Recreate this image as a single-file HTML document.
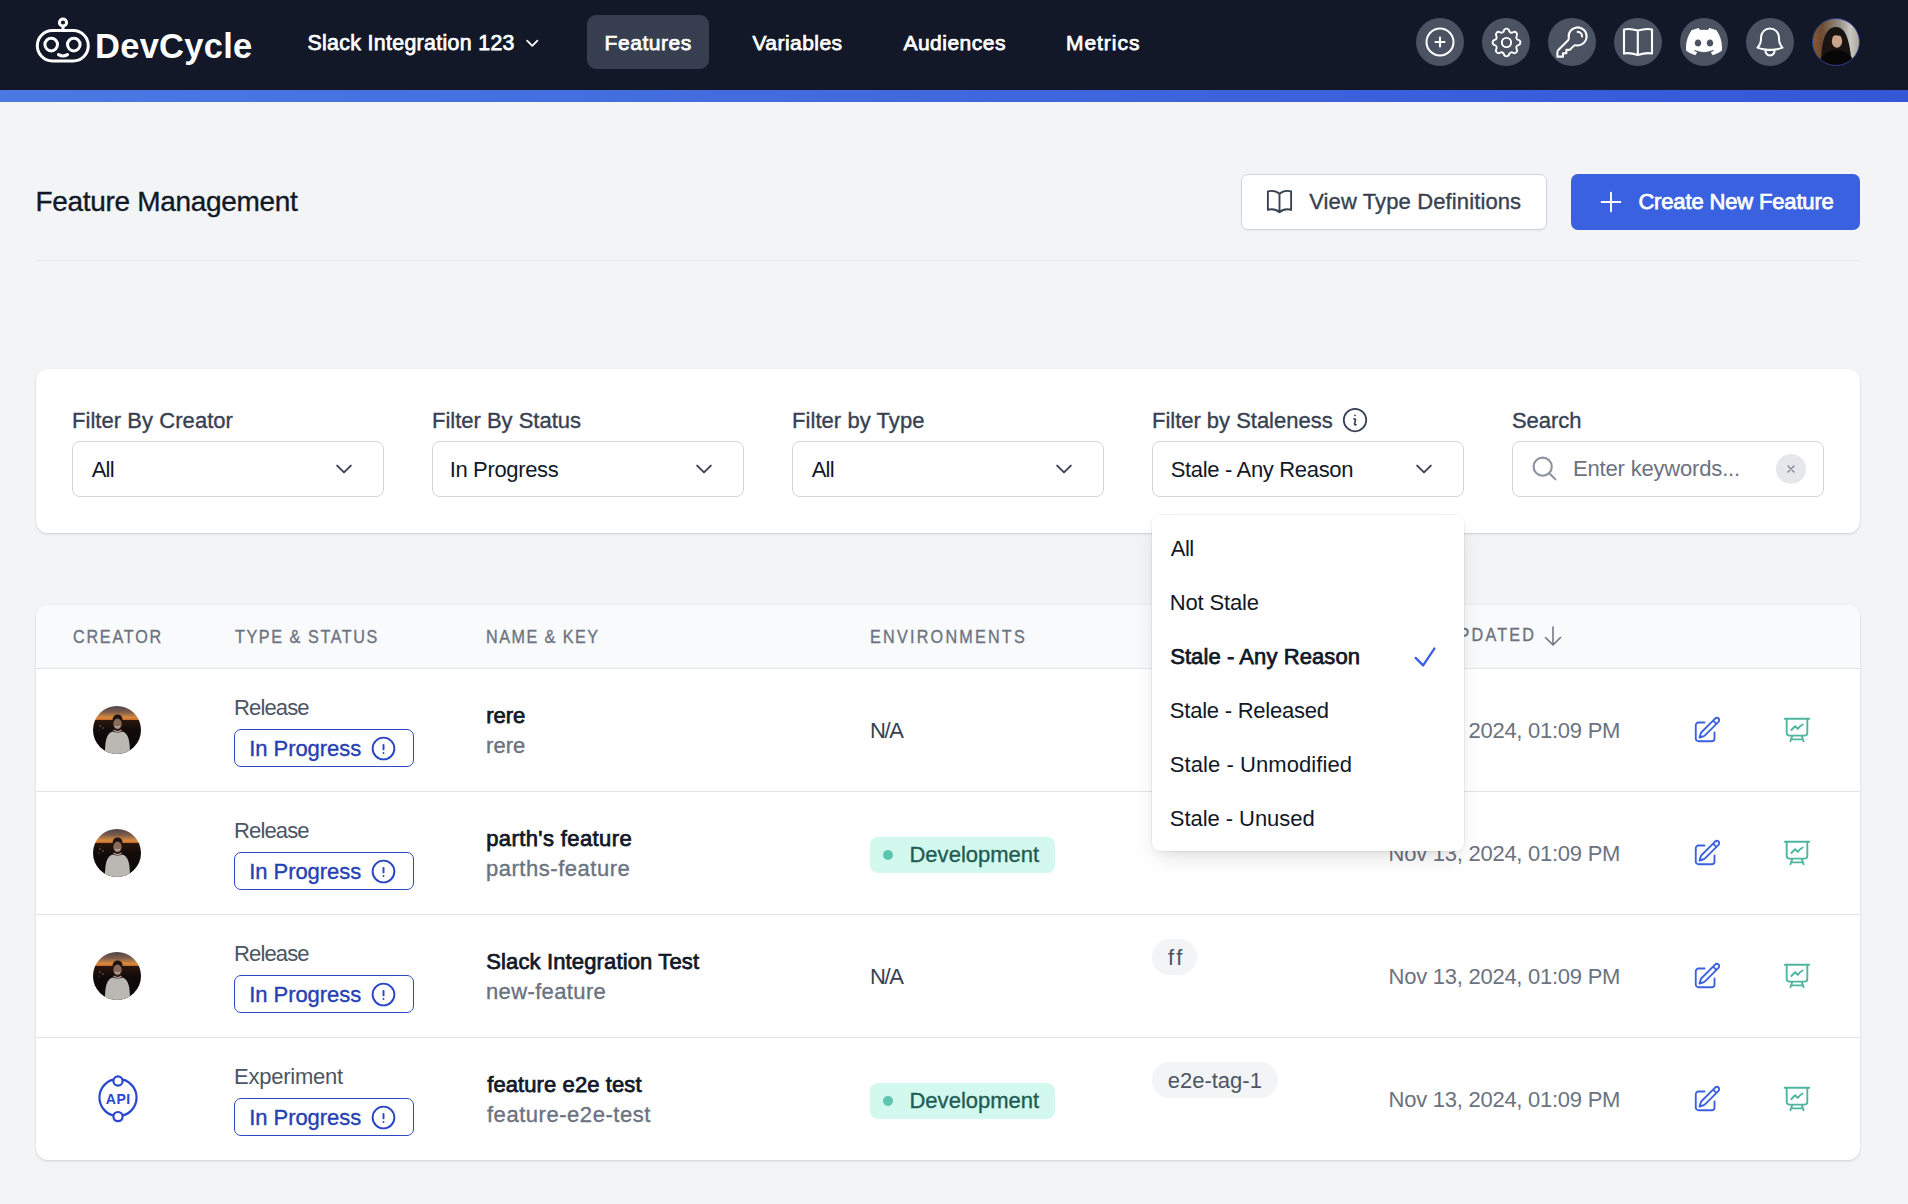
<!DOCTYPE html>
<html><head><meta charset="utf-8"><style>
html,body{margin:0;padding:0;width:1908px;height:1204px;overflow:hidden;background:#f3f4f6}
body{position:relative;font-family:"Liberation Sans",sans-serif}
.t{position:absolute;white-space:nowrap;line-height:1;font-variant-ligatures:none}
</style></head><body>
<div style="position:absolute;left:0px;top:0px;width:1908px;height:90px;background:#121827;z-index:0"></div>
<div style="position:absolute;left:0px;top:90px;width:1908px;height:12px;background:linear-gradient(90deg,#4b79e3,#3457d8);z-index:0"></div>
<svg style="position:absolute;left:34px;top:16px;z-index:2" width="58" height="48" viewBox="0 0 58 48" ><g fill="none" stroke="#fff" stroke-width="3"><rect x="3.3" y="14.6" width="51" height="30.3" rx="15.1"/><circle cx="17.2" cy="28.6" r="6.3"/><circle cx="39.8" cy="28.6" r="6.3"/><circle cx="29" cy="6.5" r="3.6"/><line x1="29" y1="10" x2="29" y2="14.5"/><path d="M24.5 38.6 q4.5 2.6 9 0" stroke-linecap="round"/></g></svg>
<div class="t" style="left:95.00px;top:28.80px;font-size:34.5px;font-weight:700;color:#ffffff;letter-spacing:0.262px;z-index:1;">DevCycle</div>
<div class="t" style="left:307.38px;top:32.57px;font-size:21.3px;font-weight:400;color:#ffffff;letter-spacing:0.350px;z-index:1;-webkit-text-stroke:0.75px #ffffff;">Slack Integration 123</div>
<svg style="position:absolute;left:524.2px;top:35.2px;z-index:2" width="16.5" height="16.5" viewBox="0 0 24 24" ><path d="m19.5 8.25-7.5 7.5-7.5-7.5" fill="none" stroke="#ffffff" stroke-width="2.6" stroke-linecap="round" stroke-linejoin="round"/></svg>
<div style="position:absolute;left:587px;top:15px;width:122px;height:54px;background:#373e4f;border-radius:9px;z-index:0"></div>
<div class="t" style="left:604.58px;top:31.72px;font-size:21px;font-weight:400;color:#ffffff;letter-spacing:0.554px;z-index:1;-webkit-text-stroke:0.75px #ffffff;">Features</div>
<div class="t" style="left:752.38px;top:31.72px;font-size:21px;font-weight:400;color:#ffffff;letter-spacing:0.470px;z-index:1;-webkit-text-stroke:0.75px #ffffff;">Variables</div>
<div class="t" style="left:903.38px;top:31.72px;font-size:21px;font-weight:400;color:#ffffff;letter-spacing:0.498px;z-index:1;-webkit-text-stroke:0.75px #ffffff;">Audiences</div>
<div class="t" style="left:1065.97px;top:31.72px;font-size:21px;font-weight:400;color:#ffffff;letter-spacing:0.964px;z-index:1;-webkit-text-stroke:0.75px #ffffff;">Metrics</div>
<div style="position:absolute;left:1416px;top:18px;width:48px;height:48px;background:#4b5262;border-radius:50%;z-index:0"></div>
<div style="position:absolute;left:1482px;top:18px;width:48px;height:48px;background:#4b5262;border-radius:50%;z-index:0"></div>
<div style="position:absolute;left:1548px;top:18px;width:48px;height:48px;background:#4b5262;border-radius:50%;z-index:0"></div>
<div style="position:absolute;left:1614px;top:18px;width:48px;height:48px;background:#4b5262;border-radius:50%;z-index:0"></div>
<div style="position:absolute;left:1680px;top:18px;width:48px;height:48px;background:#4b5262;border-radius:50%;z-index:0"></div>
<div style="position:absolute;left:1746px;top:18px;width:48px;height:48px;background:#4b5262;border-radius:50%;z-index:0"></div>
<svg style="position:absolute;left:1422px;top:24px;z-index:3" width="36" height="36" viewBox="0 0 24 24" ><path d="M12 9v6m3-3H9m12 0a9 9 0 1 1-18 0 9 9 0 0 1 18 0Z" fill="none" stroke="#ffffff" stroke-width="1.35" stroke-linecap="round" stroke-linejoin="round"/></svg>
<svg style="position:absolute;left:1487.5px;top:23.5px;z-index:3" width="37" height="37" viewBox="0 0 24 24" ><path fill="none" stroke="#fff" stroke-width="1.25" stroke-linecap="round" stroke-linejoin="round" d="M10.325 4.317c.426-1.756 2.924-1.756 3.35 0a1.724 1.724 0 002.573 1.066c1.543-.94 3.31.826 2.37 2.37a1.724 1.724 0 001.065 2.572c1.756.426 1.756 2.924 0 3.35a1.724 1.724 0 00-1.066 2.573c.94 1.543-.826 3.31-2.37 2.37a1.724 1.724 0 00-2.572 1.065c-.426 1.756-2.924 1.756-3.35 0a1.724 1.724 0 00-2.573-1.066c-1.543.94-3.310-.826-2.370-2.370a1.724 1.724 0 00-1.065-2.572c-1.756-.426-1.756-2.924 0-3.350a1.724 1.724 0 001.066-2.573c-.94-1.543.826-3.310 2.370-2.370.996.608 2.296.07 2.572-1.065z"/><path fill="none" stroke="#fff" stroke-width="1.25" d="M15 12a3 3 0 11-6 0 3 3 0 016 0z"/></svg>
<svg style="position:absolute;left:1554px;top:24px;z-index:3" width="36" height="36" viewBox="0 0 24 24" ><path d="M15.75 5.25a3 3 0 0 1 3 3m3 0a6 6 0 0 1-7.029 5.912c-.563-.097-1.159.026-1.563.43L10.5 17.25H8.25v2.25H6v2.25H2.25v-2.818c0-.597.237-1.17.659-1.591l6.499-6.499c.404-.404.527-1 .43-1.563A6 6 0 1 1 21.75 8.25Z" fill="none" stroke="#ffffff" stroke-width="1.35" stroke-linecap="round" stroke-linejoin="round"/></svg>
<svg style="position:absolute;left:1622px;top:27px;z-index:3" width="32" height="30" viewBox="0 0 32 30" ><path fill="none" stroke="#fff" stroke-width="2.1" stroke-linejoin="round" d="M2 2.5 Q8 1.2 15.8 3.6 Q24 1.2 30 2.5 V26.5 Q24 25.4 15.8 28 Q8 25.4 2 26.5 Z M15.8 3.6 V28"/></svg>
<svg style="position:absolute;left:1686px;top:28.4px;z-index:3" width="36" height="27.3" viewBox="0 0 127.14 96.36" ><path fill="#fff" d="M107.7,8.07A105.15,105.15,0,0,0,81.47,0a72.06,72.06,0,0,0-3.36,6.83A97.68,97.68,0,0,0,49,6.83,72.37,72.37,0,0,0,45.640,0,105.89,105.89,0,0,0,19.39,8.09C2.79,32.65-1.71,56.6.54,80.21h0A105.73,105.730,0,0,0,32.71,96.36,77.7,77.7,0,0,0,39.6,85.25a68.42,68.42,0,0,1-10.85-5.18c.91-.66,1.8-1.34,2.66-2a75.57,75.57,0,0,0,64.32,0c.87.71,1.76,1.39,2.66,2a68.68,68.68,0,0,1-10.87,5.19,77,77,0,0,0,6.89,11.1A105.25,105.25,0,0,0,126.6,80.22h0C129.24,52.84,122.09,29.11,107.7,8.07ZM42.45,65.69C36.18,65.69,31,60,31,53s5-12.74,11.43-12.74S54,46,53.890,53,48.84,65.690,42.450,65.690Zm42.24,0C78.41,65.69,73.25,60,73.25,53s5-12.74,11.44-12.74S96.23,46,96.12,53,91.08,65.69,84.69,65.69Z"/></svg>
<svg style="position:absolute;left:1752px;top:24px;z-index:3" width="36" height="36" viewBox="0 0 24 24" ><path d="M14.857 17.082a23.848 23.848 0 0 0 5.454-1.31A8.967 8.967 0 0 1 18 9.75V9A6 6 0 0 0 6 9v.75a8.967 8.967 0 0 1-2.312 6.022c1.733.64 3.56 1.085 5.455 1.31m5.714 0a24.255 24.255 0 0 1-5.714 0m5.714 0a3 3 0 1 1-5.714 0" fill="none" stroke="#ffffff" stroke-width="1.35" stroke-linecap="round" stroke-linejoin="round"/></svg>
<svg style="position:absolute;left:1812px;top:18px;z-index:3" width="48" height="48" viewBox="0 0 48 48" ><defs><clipPath id="ca"><circle cx="24" cy="24" r="23.5"/></clipPath><linearGradient id="gw" x1="0" x2="1"><stop offset="0" stop-color="#8a5a36"/><stop offset="0.2" stop-color="#6e4a30"/><stop offset="0.55" stop-color="#8f8a82"/><stop offset="0.8" stop-color="#c9c6bf"/><stop offset="1" stop-color="#a9a49b"/></linearGradient></defs><g clip-path="url(#ca)"><rect width="48" height="48" fill="url(#gw)"/><path d="M9 48 C9 30 11 9 24 9 C35 9 38 26 40 48Z" fill="#191311"/><ellipse cx="25" cy="23" rx="5.2" ry="6.8" fill="#c9a38c"/><path d="M18.5 20 Q21 13 27 13.5 Q31 15 31 19 Q26 16.5 21 17.5 Z" fill="#191311"/><path d="M5 48 C8 38 14 33 24.5 32 C35 33 41 38 44 48Z" fill="#080707"/></g><circle cx="24" cy="24" r="23.5" fill="none" stroke="#2b3d8a" stroke-width="1"/></svg>
<div style="position:absolute;left:0px;top:102px;width:1908px;height:1102px;background:#f3f4f6;z-index:-1"></div>
<div class="t" style="left:35.47px;top:187.80px;font-size:28px;font-weight:400;color:#111827;letter-spacing:-0.311px;z-index:1;-webkit-text-stroke:0.35px #111827;">Feature Management</div>
<div style="position:absolute;left:36px;top:260px;width:1824px;height:1px;background:#e5e7eb;z-index:0"></div>
<div style="position:absolute;left:1241px;top:174px;width:306px;height:56px;background:#fff;border:1.5px solid #d1d5db;border-radius:7px;box-sizing:border-box;box-shadow:0 1px 2px rgba(0,0,0,0.05);z-index:0"></div>
<svg style="position:absolute;left:1264.3px;top:185.5px;z-index:2" width="31" height="31" viewBox="0 0 24 24" ><path fill="none" stroke="#374151" stroke-width="1.45" stroke-linecap="round" stroke-linejoin="round" d="M12 6.042A8.967 8.967 0 0 0 6 3.75c-1.052 0-2.062.18-3 .512v14.25A8.987 8.987 0 0 1 6 18c2.305 0 4.408.867 6 2.292m0-14.25a8.966 8.966 0 0 1 6-2.292c1.052 0 2.062.18 3 .512v14.25A8.987 8.987 0 0 0 18 18a8.967 8.967 0 0 0-6 2.292m0-14.25v14.25"/></svg>
<div class="t" style="left:1309.17px;top:191.38px;font-size:22px;font-weight:400;color:#374151;letter-spacing:0.121px;z-index:3;-webkit-text-stroke:0.35px #374151;">View Type Definitions</div>
<div style="position:absolute;left:1571px;top:174px;width:289px;height:56px;background:#3a62e0;border-radius:7px;z-index:0"></div>
<svg style="position:absolute;left:1595.8px;top:186.7px;z-index:3" width="30" height="30" viewBox="0 0 24 24" ><path d="M12 4.5v15m7.5-7.5h-15" fill="none" stroke="#ffffff" stroke-width="1.5" stroke-linecap="round" stroke-linejoin="round"/></svg>
<div class="t" style="left:1638.38px;top:191.38px;font-size:22px;font-weight:400;color:#ffffff;letter-spacing:-0.153px;z-index:3;-webkit-text-stroke:0.75px #ffffff;">Create New Feature</div>
<div style="position:absolute;left:36px;top:369px;width:1824px;height:164px;background:#fff;border-radius:12px;box-shadow:0 1px 3px rgba(0,0,0,0.10),0 1px 2px rgba(0,0,0,0.06);z-index:0"></div>
<div class="t" style="left:71.97px;top:409.58px;font-size:22px;font-weight:400;color:#374151;letter-spacing:0.052px;z-index:2;-webkit-text-stroke:0.35px #374151;">Filter By Creator</div>
<div style="position:absolute;left:72px;top:441px;width:312px;height:56px;background:#fff;border:1.5px solid #d1d5db;border-radius:8px;box-sizing:border-box;z-index:1"></div>
<div class="t" style="left:91.70px;top:458.68px;font-size:22px;font-weight:400;color:#111827;letter-spacing:-0.781px;z-index:2;">All</div>
<svg style="position:absolute;left:333px;top:458px;z-index:2" width="22" height="22" viewBox="0 0 24 24" ><path d="m19.5 8.25-7.5 7.5-7.5-7.5" fill="none" stroke="#374151" stroke-width="2.0" stroke-linecap="round" stroke-linejoin="round"/></svg>
<div class="t" style="left:431.98px;top:409.58px;font-size:22px;font-weight:400;color:#374151;letter-spacing:-0.007px;z-index:2;-webkit-text-stroke:0.35px #374151;">Filter By Status</div>
<div style="position:absolute;left:432px;top:441px;width:312px;height:56px;background:#fff;border:1.5px solid #d1d5db;border-radius:8px;box-sizing:border-box;z-index:1"></div>
<div class="t" style="left:449.70px;top:458.68px;font-size:22px;font-weight:400;color:#111827;letter-spacing:-0.349px;z-index:2;">In Progress</div>
<svg style="position:absolute;left:693px;top:458px;z-index:2" width="22" height="22" viewBox="0 0 24 24" ><path d="m19.5 8.25-7.5 7.5-7.5-7.5" fill="none" stroke="#374151" stroke-width="2.0" stroke-linecap="round" stroke-linejoin="round"/></svg>
<div class="t" style="left:791.97px;top:409.58px;font-size:22px;font-weight:400;color:#374151;letter-spacing:0.065px;z-index:2;-webkit-text-stroke:0.35px #374151;">Filter by Type</div>
<div style="position:absolute;left:792px;top:441px;width:312px;height:56px;background:#fff;border:1.5px solid #d1d5db;border-radius:8px;box-sizing:border-box;z-index:1"></div>
<div class="t" style="left:811.70px;top:458.68px;font-size:22px;font-weight:400;color:#111827;letter-spacing:-0.781px;z-index:2;">All</div>
<svg style="position:absolute;left:1053px;top:458px;z-index:2" width="22" height="22" viewBox="0 0 24 24" ><path d="m19.5 8.25-7.5 7.5-7.5-7.5" fill="none" stroke="#374151" stroke-width="2.0" stroke-linecap="round" stroke-linejoin="round"/></svg>
<div class="t" style="left:1151.97px;top:409.58px;font-size:22px;font-weight:400;color:#374151;letter-spacing:-0.017px;z-index:2;-webkit-text-stroke:0.35px #374151;">Filter by Staleness</div>
<div style="position:absolute;left:1152px;top:441px;width:312px;height:56px;background:#fff;border:1.5px solid #d1d5db;border-radius:8px;box-sizing:border-box;z-index:1"></div>
<div class="t" style="left:1170.70px;top:458.68px;font-size:22px;font-weight:400;color:#111827;letter-spacing:-0.324px;z-index:2;">Stale - Any Reason</div>
<svg style="position:absolute;left:1413px;top:458px;z-index:2" width="22" height="22" viewBox="0 0 24 24" ><path d="m19.5 8.25-7.5 7.5-7.5-7.5" fill="none" stroke="#374151" stroke-width="2.0" stroke-linecap="round" stroke-linejoin="round"/></svg>
<svg style="position:absolute;left:1340px;top:405px;z-index:2" width="30" height="30" viewBox="0 0 24 24" ><path fill="none" stroke="#374151" stroke-width="1.4" stroke-linecap="round" stroke-linejoin="round" d="m11.25 11.25.041-.02a.75.75 0 0 1 1.063.852l-.708 2.836a.75.75 0 0 0 1.063.853l.041-.021M21 12a9 9 0 1 1-18 0 9 9 0 0 1 18 0Zm-9-3.75h.008v.008H12V8.25Z"/></svg>
<div class="t" style="left:1511.97px;top:409.58px;font-size:22px;font-weight:400;color:#374151;letter-spacing:-0.024px;z-index:2;-webkit-text-stroke:0.35px #374151;">Search</div>
<div style="position:absolute;left:1512px;top:441px;width:312px;height:56px;background:#fff;border:1.5px solid #d1d5db;border-radius:8px;box-sizing:border-box;z-index:1"></div>
<svg style="position:absolute;left:1530px;top:454px;z-index:2" width="29" height="29" viewBox="0 0 24 24" ><path d="m21 21-5.197-5.197m0 0A7.5 7.5 0 1 0 5.196 5.196a7.5 7.5 0 0 0 10.607 10.607Z" fill="none" stroke="#8b93a1" stroke-width="1.75" stroke-linecap="round" stroke-linejoin="round"/></svg>
<div class="t" style="left:1573.00px;top:458.38px;font-size:22px;font-weight:400;color:#6b7280;letter-spacing:-0.177px;z-index:2;">Enter keywords...</div>
<div style="position:absolute;left:1776px;top:454px;width:30px;height:30px;background:#e5e7eb;border-radius:50%;z-index:2"></div>
<svg style="position:absolute;left:1785px;top:463px;z-index:3" width="12" height="12" viewBox="0 0 24 24" ><path d="M6 18 18 6M6 6l12 12" fill="none" stroke="#7b8390" stroke-width="2.6" stroke-linecap="round" stroke-linejoin="round"/></svg>
<div style="position:absolute;left:36px;top:605px;width:1824px;height:555px;background:#fff;border-radius:12px;box-shadow:0 1px 3px rgba(0,0,0,0.10),0 1px 2px rgba(0,0,0,0.06);overflow:hidden;z-index:0"><div style="position:absolute;left:0;top:0;width:100%;height:63px;background:#f9fafb"></div><div style="position:absolute;left:0;top:63px;width:100%;height:1px;background:#e2e4e9"></div><div style="position:absolute;left:0;top:186px;width:100%;height:1px;background:#e2e4e9"></div><div style="position:absolute;left:0;top:309px;width:100%;height:1px;background:#e2e4e9"></div><div style="position:absolute;left:0;top:432px;width:100%;height:1px;background:#e2e4e9"></div></div>
<div class="t" style="left:72.97px;top:628.29px;font-size:18.8px;font-weight:400;color:#6b7280;letter-spacing:2.075px;z-index:1;-webkit-text-stroke:0.35px #6b7280;transform:scaleX(0.86);transform-origin:-0.17px 0;">CREATOR</div>
<div class="t" style="left:235.18px;top:628.29px;font-size:18.8px;font-weight:400;color:#6b7280;letter-spacing:1.846px;z-index:1;-webkit-text-stroke:0.35px #6b7280;transform:scaleX(0.86);transform-origin:-0.17px 0;">TYPE &amp; STATUS</div>
<div class="t" style="left:486.07px;top:628.29px;font-size:18.8px;font-weight:400;color:#6b7280;letter-spacing:1.701px;z-index:1;-webkit-text-stroke:0.35px #6b7280;transform:scaleX(0.86);transform-origin:0.82px 0;">NAME &amp; KEY</div>
<div class="t" style="left:870.07px;top:628.29px;font-size:18.8px;font-weight:400;color:#6b7280;letter-spacing:2.589px;z-index:1;-webkit-text-stroke:0.35px #6b7280;transform:scaleX(0.86);transform-origin:0.82px 0;">ENVIRONMENTS</div>
<div class="t" style="left:1152.17px;top:628.29px;font-size:18.8px;font-weight:400;color:#6b7280;letter-spacing:2.500px;z-index:1;-webkit-text-stroke:0.35px #6b7280;transform:scaleX(0.86);transform-origin:-0.17px 0;">TAGS</div>
<div class="t" style="left:1388.77px;top:626.09px;font-size:18.8px;font-weight:400;color:#6b7280;letter-spacing:2.556px;z-index:1;-webkit-text-stroke:0.35px #6b7280;transform:scaleX(0.86);transform-origin:0.82px 0;">LAST UPDATED</div>
<svg style="position:absolute;left:1541px;top:624px;z-index:1" width="24" height="24" viewBox="0 0 24 24" ><path d="M19.5 13.5 12 21m0 0-7.5-7.5M12 21V3" fill="none" stroke="#6b7280" stroke-width="1.5" stroke-linecap="round" stroke-linejoin="round"/></svg>
<svg style="position:absolute;left:93px;top:706px;z-index:2" width="48" height="48" viewBox="0 0 48 48" ><defs><clipPath id="cb730"><circle cx="24" cy="24" r="24"/></clipPath><linearGradient id="gs730" x1="0" y1="0" x2="0" y2="1"><stop offset="0" stop-color="#4f4448"/><stop offset="0.12" stop-color="#7a5b4c"/><stop offset="0.24" stop-color="#d88a3e"/><stop offset="0.29" stop-color="#c46a2a"/><stop offset="0.30" stop-color="#2a160e"/><stop offset="0.5" stop-color="#120b09"/><stop offset="1" stop-color="#0a0807"/></linearGradient></defs><g clip-path="url(#cb730)"><rect width="48" height="48" fill="url(#gs730)"/><circle cx="7" cy="20" r="0.8" fill="#8a7a6a"/><circle cx="10" cy="22" r="0.7" fill="#9a8a7a"/><circle cx="6" cy="24" r="0.6" fill="#7a6a5a"/><path d="M19.5 14 Q20 8.5 24.5 8.5 Q29.5 8.5 29.5 14 L29 16 L20 16Z" fill="#1e1410"/><ellipse cx="24.5" cy="18" rx="4.2" ry="5.4" fill="#8a6a58"/><path d="M22 20.5 Q24.5 22 27 20.5" stroke="#d8d0c8" stroke-width="1" fill="none"/><path d="M12 48 C12 34 13.5 28 19.5 25.5 Q24.5 27.5 29.5 25.5 C35.5 28 37 34 37 48Z" fill="#b9b8b2"/><path d="M20.5 24 Q24.5 27 28.5 24" stroke="#c9a4a0" stroke-width="1.2" fill="none"/></g></svg>
<div class="t" style="left:234.00px;top:697.38px;font-size:22px;font-weight:400;color:#4b5563;letter-spacing:-0.864px;z-index:1;">Release</div>
<div style="position:absolute;left:234px;top:729px;width:180px;height:38px;border:1.5px solid #2e48c4;border-radius:7px;box-sizing:border-box;z-index:1"></div>
<div class="t" style="left:249.18px;top:738.18px;font-size:22px;font-weight:400;color:#2440b4;letter-spacing:-0.044px;z-index:1;-webkit-text-stroke:0.35px #2440b4;">In Progress</div>
<svg style="position:absolute;left:368.5px;top:733.5px;z-index:1" width="29" height="29" viewBox="0 0 24 24" ><path d="M12 9v3.75m9-.75a9 9 0 1 1-18 0 9 9 0 0 1 18 0Zm-9 3.75h.008v.008H12v-.008Z" fill="none" stroke="#2a46c4" stroke-width="1.6" stroke-linecap="round" stroke-linejoin="round"/></svg>
<div class="t" style="left:486.18px;top:704.68px;font-size:22px;font-weight:400;color:#111827;letter-spacing:-0.046px;z-index:1;-webkit-text-stroke:0.75px #111827;">rere</div>
<div class="t" style="left:485.98px;top:734.58px;font-size:22px;font-weight:400;color:#6b7280;letter-spacing:0.087px;z-index:1;-webkit-text-stroke:0.35px #6b7280;">rere</div>
<div class="t" style="left:870.00px;top:719.58px;font-size:22px;font-weight:400;color:#374151;letter-spacing:-1.350px;z-index:1;">N/A</div>
<div class="t" style="left:1388.60px;top:720.18px;font-size:22px;font-weight:400;color:#6b7280;letter-spacing:-0.259px;z-index:1;">Nov 13, 2024, 01:09 PM</div>
<svg style="position:absolute;left:1692px;top:714.5px;z-index:1" width="30" height="30" viewBox="0 0 24 24" ><path d="m16.862 4.487 1.687-1.688a1.875 1.875 0 1 1 2.652 2.652L10.582 16.07a4.5 4.5 0 0 1-1.897 1.13L6 18l.8-2.685a4.5 4.5 0 0 1 1.13-1.897l8.932-8.931Zm0 0L19.5 7.125M18 14v4.75A2.25 2.25 0 0 1 15.75 21H5.25A2.25 2.25 0 0 1 3 18.75V8.25A2.25 2.25 0 0 1 5.25 6H10" fill="none" stroke="#3a62e0" stroke-width="1.5" stroke-linecap="round" stroke-linejoin="round"/></svg>
<svg style="position:absolute;left:1782px;top:715px;z-index:1" width="30" height="30" viewBox="0 0 24 24" ><path d="M3.75 3v11.25A2.25 2.25 0 0 0 6 16.5h2.25M3.75 3h-1.5m1.5 0h16.5m0 0h1.5m-1.5 0v11.25A2.25 2.25 0 0 1 18 16.5h-2.25m-7.5 0h7.5m-7.5 0-1 3m8.5-3 1 3m0 0 .5 1.5m-.5-1.5h-9.5m0 0-.5 1.5m.75-9 3-3 2.148 2.148A12.061 12.061 0 0 1 16.5 7.605" fill="none" stroke="#4db69f" stroke-width="1.5" stroke-linecap="round" stroke-linejoin="round"/></svg>
<svg style="position:absolute;left:93px;top:829px;z-index:2" width="48" height="48" viewBox="0 0 48 48" ><defs><clipPath id="cb853"><circle cx="24" cy="24" r="24"/></clipPath><linearGradient id="gs853" x1="0" y1="0" x2="0" y2="1"><stop offset="0" stop-color="#4f4448"/><stop offset="0.12" stop-color="#7a5b4c"/><stop offset="0.24" stop-color="#d88a3e"/><stop offset="0.29" stop-color="#c46a2a"/><stop offset="0.30" stop-color="#2a160e"/><stop offset="0.5" stop-color="#120b09"/><stop offset="1" stop-color="#0a0807"/></linearGradient></defs><g clip-path="url(#cb853)"><rect width="48" height="48" fill="url(#gs853)"/><circle cx="7" cy="20" r="0.8" fill="#8a7a6a"/><circle cx="10" cy="22" r="0.7" fill="#9a8a7a"/><circle cx="6" cy="24" r="0.6" fill="#7a6a5a"/><path d="M19.5 14 Q20 8.5 24.5 8.5 Q29.5 8.5 29.5 14 L29 16 L20 16Z" fill="#1e1410"/><ellipse cx="24.5" cy="18" rx="4.2" ry="5.4" fill="#8a6a58"/><path d="M22 20.5 Q24.5 22 27 20.5" stroke="#d8d0c8" stroke-width="1" fill="none"/><path d="M12 48 C12 34 13.5 28 19.5 25.5 Q24.5 27.5 29.5 25.5 C35.5 28 37 34 37 48Z" fill="#b9b8b2"/><path d="M20.5 24 Q24.5 27 28.5 24" stroke="#c9a4a0" stroke-width="1.2" fill="none"/></g></svg>
<div class="t" style="left:234.00px;top:820.38px;font-size:22px;font-weight:400;color:#4b5563;letter-spacing:-0.864px;z-index:1;">Release</div>
<div style="position:absolute;left:234px;top:852px;width:180px;height:38px;border:1.5px solid #2e48c4;border-radius:7px;box-sizing:border-box;z-index:1"></div>
<div class="t" style="left:249.18px;top:861.18px;font-size:22px;font-weight:400;color:#2440b4;letter-spacing:-0.044px;z-index:1;-webkit-text-stroke:0.35px #2440b4;">In Progress</div>
<svg style="position:absolute;left:368.5px;top:856.5px;z-index:1" width="29" height="29" viewBox="0 0 24 24" ><path d="M12 9v3.75m9-.75a9 9 0 1 1-18 0 9 9 0 0 1 18 0Zm-9 3.75h.008v.008H12v-.008Z" fill="none" stroke="#2a46c4" stroke-width="1.6" stroke-linecap="round" stroke-linejoin="round"/></svg>
<div class="t" style="left:486.18px;top:827.68px;font-size:22px;font-weight:400;color:#111827;letter-spacing:0.395px;z-index:1;-webkit-text-stroke:0.75px #111827;">parth's feature</div>
<div class="t" style="left:485.98px;top:857.58px;font-size:22px;font-weight:400;color:#6b7280;letter-spacing:0.532px;z-index:1;-webkit-text-stroke:0.35px #6b7280;">parths-feature</div>
<div style="position:absolute;left:870.4px;top:837.3px;width:184.60000000000002px;height:35.30000000000007px;background:#d3f8ee;border-radius:8px;z-index:1"></div>
<div style="position:absolute;left:883px;top:850px;width:10px;height:10px;background:#5cc6ae;border-radius:50%;z-index:1"></div>
<div class="t" style="left:909.47px;top:844.38px;font-size:22px;font-weight:400;color:#1f5c54;letter-spacing:0.014px;z-index:1;-webkit-text-stroke:0.35px #1f5c54;">Development</div>
<div class="t" style="left:1388.60px;top:843.18px;font-size:22px;font-weight:400;color:#6b7280;letter-spacing:-0.259px;z-index:1;">Nov 13, 2024, 01:09 PM</div>
<svg style="position:absolute;left:1692px;top:837.5px;z-index:1" width="30" height="30" viewBox="0 0 24 24" ><path d="m16.862 4.487 1.687-1.688a1.875 1.875 0 1 1 2.652 2.652L10.582 16.07a4.5 4.5 0 0 1-1.897 1.13L6 18l.8-2.685a4.5 4.5 0 0 1 1.13-1.897l8.932-8.931Zm0 0L19.5 7.125M18 14v4.75A2.25 2.25 0 0 1 15.75 21H5.25A2.25 2.25 0 0 1 3 18.75V8.25A2.25 2.25 0 0 1 5.25 6H10" fill="none" stroke="#3a62e0" stroke-width="1.5" stroke-linecap="round" stroke-linejoin="round"/></svg>
<svg style="position:absolute;left:1782px;top:838px;z-index:1" width="30" height="30" viewBox="0 0 24 24" ><path d="M3.75 3v11.25A2.25 2.25 0 0 0 6 16.5h2.25M3.75 3h-1.5m1.5 0h16.5m0 0h1.5m-1.5 0v11.25A2.25 2.25 0 0 1 18 16.5h-2.25m-7.5 0h7.5m-7.5 0-1 3m8.5-3 1 3m0 0 .5 1.5m-.5-1.5h-9.5m0 0-.5 1.5m.75-9 3-3 2.148 2.148A12.061 12.061 0 0 1 16.5 7.605" fill="none" stroke="#4db69f" stroke-width="1.5" stroke-linecap="round" stroke-linejoin="round"/></svg>
<svg style="position:absolute;left:93px;top:952px;z-index:2" width="48" height="48" viewBox="0 0 48 48" ><defs><clipPath id="cb976"><circle cx="24" cy="24" r="24"/></clipPath><linearGradient id="gs976" x1="0" y1="0" x2="0" y2="1"><stop offset="0" stop-color="#4f4448"/><stop offset="0.12" stop-color="#7a5b4c"/><stop offset="0.24" stop-color="#d88a3e"/><stop offset="0.29" stop-color="#c46a2a"/><stop offset="0.30" stop-color="#2a160e"/><stop offset="0.5" stop-color="#120b09"/><stop offset="1" stop-color="#0a0807"/></linearGradient></defs><g clip-path="url(#cb976)"><rect width="48" height="48" fill="url(#gs976)"/><circle cx="7" cy="20" r="0.8" fill="#8a7a6a"/><circle cx="10" cy="22" r="0.7" fill="#9a8a7a"/><circle cx="6" cy="24" r="0.6" fill="#7a6a5a"/><path d="M19.5 14 Q20 8.5 24.5 8.5 Q29.5 8.5 29.5 14 L29 16 L20 16Z" fill="#1e1410"/><ellipse cx="24.5" cy="18" rx="4.2" ry="5.4" fill="#8a6a58"/><path d="M22 20.5 Q24.5 22 27 20.5" stroke="#d8d0c8" stroke-width="1" fill="none"/><path d="M12 48 C12 34 13.5 28 19.5 25.5 Q24.5 27.5 29.5 25.5 C35.5 28 37 34 37 48Z" fill="#b9b8b2"/><path d="M20.5 24 Q24.5 27 28.5 24" stroke="#c9a4a0" stroke-width="1.2" fill="none"/></g></svg>
<div class="t" style="left:234.00px;top:943.38px;font-size:22px;font-weight:400;color:#4b5563;letter-spacing:-0.864px;z-index:1;">Release</div>
<div style="position:absolute;left:234px;top:975px;width:180px;height:38px;border:1.5px solid #2e48c4;border-radius:7px;box-sizing:border-box;z-index:1"></div>
<div class="t" style="left:249.18px;top:984.18px;font-size:22px;font-weight:400;color:#2440b4;letter-spacing:-0.044px;z-index:1;-webkit-text-stroke:0.35px #2440b4;">In Progress</div>
<svg style="position:absolute;left:368.5px;top:979.5px;z-index:1" width="29" height="29" viewBox="0 0 24 24" ><path d="M12 9v3.75m9-.75a9 9 0 1 1-18 0 9 9 0 0 1 18 0Zm-9 3.75h.008v.008H12v-.008Z" fill="none" stroke="#2a46c4" stroke-width="1.6" stroke-linecap="round" stroke-linejoin="round"/></svg>
<div class="t" style="left:486.18px;top:950.68px;font-size:22px;font-weight:400;color:#111827;letter-spacing:0.144px;z-index:1;-webkit-text-stroke:0.75px #111827;">Slack Integration Test</div>
<div class="t" style="left:485.98px;top:980.58px;font-size:22px;font-weight:400;color:#6b7280;letter-spacing:0.371px;z-index:1;-webkit-text-stroke:0.35px #6b7280;">new-feature</div>
<div class="t" style="left:870.00px;top:965.58px;font-size:22px;font-weight:400;color:#374151;letter-spacing:-1.350px;z-index:1;">N/A</div>
<div style="position:absolute;left:1152.4px;top:939.3px;width:44.299999999999955px;height:35.700000000000045px;background:#f3f4f6;border-radius:18px;z-index:1"></div>
<div class="t" style="left:1167.90px;top:946.58px;font-size:22px;font-weight:400;color:#4b5563;letter-spacing:2.600px;z-index:1;">ff</div>
<div class="t" style="left:1388.60px;top:966.18px;font-size:22px;font-weight:400;color:#6b7280;letter-spacing:-0.259px;z-index:1;">Nov 13, 2024, 01:09 PM</div>
<svg style="position:absolute;left:1692px;top:960.5px;z-index:1" width="30" height="30" viewBox="0 0 24 24" ><path d="m16.862 4.487 1.687-1.688a1.875 1.875 0 1 1 2.652 2.652L10.582 16.07a4.5 4.5 0 0 1-1.897 1.13L6 18l.8-2.685a4.5 4.5 0 0 1 1.13-1.897l8.932-8.931Zm0 0L19.5 7.125M18 14v4.75A2.25 2.25 0 0 1 15.75 21H5.25A2.25 2.25 0 0 1 3 18.75V8.25A2.25 2.25 0 0 1 5.25 6H10" fill="none" stroke="#3a62e0" stroke-width="1.5" stroke-linecap="round" stroke-linejoin="round"/></svg>
<svg style="position:absolute;left:1782px;top:961px;z-index:1" width="30" height="30" viewBox="0 0 24 24" ><path d="M3.75 3v11.25A2.25 2.25 0 0 0 6 16.5h2.25M3.75 3h-1.5m1.5 0h16.5m0 0h1.5m-1.5 0v11.25A2.25 2.25 0 0 1 18 16.5h-2.25m-7.5 0h7.5m-7.5 0-1 3m8.5-3 1 3m0 0 .5 1.5m-.5-1.5h-9.5m0 0-.5 1.5m.75-9 3-3 2.148 2.148A12.061 12.061 0 0 1 16.5 7.605" fill="none" stroke="#4db69f" stroke-width="1.5" stroke-linecap="round" stroke-linejoin="round"/></svg>
<svg style="position:absolute;left:96px;top:1073px;z-index:2" width="44" height="52" viewBox="0 0 44 52" ><g fill="none" stroke="#2a46d1" stroke-width="2.2"><path d="M17 6.6 A18.6 18.6 0 0 0 17 42.4"/><path d="M27 6.6 A18.6 18.6 0 0 1 27 42.4"/><circle cx="22" cy="8" r="4.6"/><circle cx="22" cy="43.6" r="4.6"/></g><text x="22.3" y="30.9" text-anchor="middle" font-family="Liberation Sans" font-weight="700" font-size="14" letter-spacing="0.6" fill="#2a46d1">API</text></svg>
<div class="t" style="left:234.00px;top:1066.38px;font-size:22px;font-weight:400;color:#4b5563;letter-spacing:-0.239px;z-index:1;">Experiment</div>
<div style="position:absolute;left:234px;top:1098px;width:180px;height:38px;border:1.5px solid #2e48c4;border-radius:7px;box-sizing:border-box;z-index:1"></div>
<div class="t" style="left:249.18px;top:1107.18px;font-size:22px;font-weight:400;color:#2440b4;letter-spacing:-0.044px;z-index:1;-webkit-text-stroke:0.35px #2440b4;">In Progress</div>
<svg style="position:absolute;left:368.5px;top:1102.5px;z-index:1" width="29" height="29" viewBox="0 0 24 24" ><path d="M12 9v3.75m9-.75a9 9 0 1 1-18 0 9 9 0 0 1 18 0Zm-9 3.75h.008v.008H12v-.008Z" fill="none" stroke="#2a46c4" stroke-width="1.6" stroke-linecap="round" stroke-linejoin="round"/></svg>
<div class="t" style="left:487.18px;top:1073.68px;font-size:22px;font-weight:400;color:#111827;letter-spacing:0.099px;z-index:1;-webkit-text-stroke:0.75px #111827;">feature e2e test</div>
<div class="t" style="left:486.98px;top:1103.58px;font-size:22px;font-weight:400;color:#6b7280;letter-spacing:0.537px;z-index:1;-webkit-text-stroke:0.35px #6b7280;">feature-e2e-test</div>
<div style="position:absolute;left:870.4px;top:1083.3px;width:184.60000000000002px;height:35.299999999999955px;background:#d3f8ee;border-radius:8px;z-index:1"></div>
<div style="position:absolute;left:883px;top:1096px;width:10px;height:10px;background:#5cc6ae;border-radius:50%;z-index:1"></div>
<div class="t" style="left:909.47px;top:1090.38px;font-size:22px;font-weight:400;color:#1f5c54;letter-spacing:0.014px;z-index:1;-webkit-text-stroke:0.35px #1f5c54;">Development</div>
<div style="position:absolute;left:1152.2px;top:1062.3px;width:125.79999999999995px;height:35.700000000000045px;background:#f3f4f6;border-radius:18px;z-index:1"></div>
<div class="t" style="left:1167.70px;top:1069.58px;font-size:22px;font-weight:400;color:#4b5563;letter-spacing:0.007px;z-index:1;">e2e-tag-1</div>
<div class="t" style="left:1388.60px;top:1089.18px;font-size:22px;font-weight:400;color:#6b7280;letter-spacing:-0.259px;z-index:1;">Nov 13, 2024, 01:09 PM</div>
<svg style="position:absolute;left:1692px;top:1083.5px;z-index:1" width="30" height="30" viewBox="0 0 24 24" ><path d="m16.862 4.487 1.687-1.688a1.875 1.875 0 1 1 2.652 2.652L10.582 16.07a4.5 4.5 0 0 1-1.897 1.13L6 18l.8-2.685a4.5 4.5 0 0 1 1.13-1.897l8.932-8.931Zm0 0L19.5 7.125M18 14v4.75A2.25 2.25 0 0 1 15.75 21H5.25A2.25 2.25 0 0 1 3 18.75V8.25A2.25 2.25 0 0 1 5.25 6H10" fill="none" stroke="#3a62e0" stroke-width="1.5" stroke-linecap="round" stroke-linejoin="round"/></svg>
<svg style="position:absolute;left:1782px;top:1084px;z-index:1" width="30" height="30" viewBox="0 0 24 24" ><path d="M3.75 3v11.25A2.25 2.25 0 0 0 6 16.5h2.25M3.75 3h-1.5m1.5 0h16.5m0 0h1.5m-1.5 0v11.25A2.25 2.25 0 0 1 18 16.5h-2.25m-7.5 0h7.5m-7.5 0-1 3m8.5-3 1 3m0 0 .5 1.5m-.5-1.5h-9.5m0 0-.5 1.5m.75-9 3-3 2.148 2.148A12.061 12.061 0 0 1 16.5 7.605" fill="none" stroke="#4db69f" stroke-width="1.5" stroke-linecap="round" stroke-linejoin="round"/></svg>
<div style="position:absolute;left:1152px;top:514.5px;width:312px;height:336.5px;background:#fff;border-radius:8px;box-shadow:0 10px 25px -5px rgba(0,0,0,0.12),0 4px 10px -4px rgba(0,0,0,0.08),0 0 0 1px rgba(0,0,0,0.04);z-index:10"></div>
<div class="t" style="left:1170.80px;top:537.58px;font-size:22px;font-weight:400;color:#111827;letter-spacing:-0.581px;z-index:11;">All</div>
<div class="t" style="left:1169.80px;top:591.58px;font-size:22px;font-weight:400;color:#111827;letter-spacing:-0.157px;z-index:11;">Not Stale</div>
<div class="t" style="left:1170.17px;top:645.58px;font-size:22px;font-weight:400;color:#111827;letter-spacing:0.085px;z-index:11;-webkit-text-stroke:0.75px #111827;">Stale - Any Reason</div>
<div class="t" style="left:1169.80px;top:699.58px;font-size:22px;font-weight:400;color:#111827;letter-spacing:-0.227px;z-index:11;">Stale - Released</div>
<div class="t" style="left:1169.80px;top:753.58px;font-size:22px;font-weight:400;color:#111827;letter-spacing:0.074px;z-index:11;">Stale - Unmodified</div>
<div class="t" style="left:1169.80px;top:807.58px;font-size:22px;font-weight:400;color:#111827;letter-spacing:-0.053px;z-index:11;">Stale - Unused</div>
<svg style="position:absolute;left:1410px;top:642px;z-index:11" width="30" height="30" viewBox="0 0 24 24" ><path d="m4.5 12.75 6 6 9-13.5" fill="none" stroke="#3a5fe0" stroke-width="1.85" stroke-linecap="round" stroke-linejoin="round"/></svg>
</body></html>
